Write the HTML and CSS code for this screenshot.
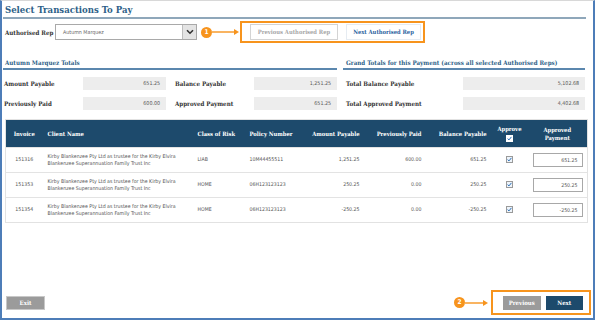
FILE: index.html
```html
<!DOCTYPE html>
<html>
<head>
<meta charset="utf-8">
<link rel="stylesheet" href="styles.css">
</head>
<body>
<div class="frame">
  <h1 class="title">Select Transactions To Pay</h1>

  <div class="rep-row">
    <span class="label rep-label">Authorised Rep</span>
    <div class="select">
      <span class="select-text">Autumn Marquez</span>
      <span class="select-arrow"><svg width="8" height="6" viewBox="0 0 8 6"><path d="M1 1.2 L4 4.2 L7 1.2" fill="none" stroke="#333" stroke-width="1.6"/></svg></span>
    </div>
    <div class="callout">
      <span class="badge">1</span>
      <svg class="pointer" width="28" height="8" viewBox="0 0 28 8"><line x1="0" y1="4" x2="23" y2="4" stroke="#f7941d" stroke-width="1.4"/><path d="M22 1 L27 4 L22 7 Z" fill="#f7941d"/></svg>
    </div>
    <div class="hl-box">
      <button class="btn-outline muted">Previous Authorised Rep</button>
      <button class="btn-outline strong">Next Authorised Rep</button>
    </div>
  </div>

  <div class="totals">
    <section class="tot-left">
      <h2 class="sec-head">Autumn Marquez Totals</h2>
      <div class="grid-left">
        <span class="label">Amount Payable</span><span class="val">651.25</span>
        <span class="label pad">Balance Payable</span><span class="val">1,251.25</span>
        <span class="label">Previously Paid</span><span class="val">600.00</span>
        <span class="label pad">Approved Payment</span><span class="val">651.25</span>
      </div>
    </section>
    <section class="tot-right">
      <h2 class="sec-head">Grand Totals for this Payment (across all selected Authorised Reps)</h2>
      <div class="grid-right">
        <span class="label">Total Balance Payable</span><span class="val">5,102.68</span>
        <span class="label">Total Approved Payment</span><span class="val">4,402.68</span>
      </div>
    </section>
  </div>

  <table class="tx">
    <colgroup>
      <col class="c-inv"><col class="c-client"><col class="c-risk"><col class="c-pol"><col class="c-amt"><col class="c-prev"><col class="c-bal"><col class="c-appr"><col class="c-pay">
    </colgroup>
    <thead>
      <tr>
        <th class="ctr">Invoice</th>
        <th class="left">Client Name</th>
        <th class="left">Class of Risk</th>
        <th class="left">Policy Number</th>
        <th class="right">Amount Payable</th>
        <th class="right">Previously Paid</th>
        <th class="right">Balance Payable</th>
        <th class="ctr">Approve<br><span class="chk hdr"><svg width="5" height="5" viewBox="0 0 5 5"><path d="M0.6 2.6 L2 3.9 L4.4 0.9" fill="none" stroke="#2a6fb8" stroke-width="1"/></svg></span></th>
        <th class="ctr">Approved<br>Payment</th>
      </tr>
    </thead>
    <tbody>
      <tr>
        <td class="ctr">151316</td>
        <td class="left">Kirby Blankenzee Pty Ltd as trustee for the Kirby Elvira Blankenzee Superannuation Family Trust Inc</td>
        <td class="left">LIAB</td>
        <td class="left">10M44455511</td>
        <td class="right">1,251.25</td>
        <td class="right">600.00</td>
        <td class="right">651.25</td>
        <td class="ctr"><span class="chk"><svg width="5" height="5" viewBox="0 0 5 5"><path d="M0.6 2.6 L2 3.9 L4.4 0.9" fill="none" stroke="#2a6fb8" stroke-width="1"/></svg></span></td>
        <td class="ctr"><span class="pay-input">651.25</span></td>
      </tr>
      <tr>
        <td class="ctr">151353</td>
        <td class="left">Kirby Blankenzee Pty Ltd as trustee for the Kirby Elvira Blankenzee Superannuation Family Trust Inc</td>
        <td class="left">HOME</td>
        <td class="left">06H123123123</td>
        <td class="right">250.25</td>
        <td class="right">0.00</td>
        <td class="right">250.25</td>
        <td class="ctr"><span class="chk"><svg width="5" height="5" viewBox="0 0 5 5"><path d="M0.6 2.6 L2 3.9 L4.4 0.9" fill="none" stroke="#2a6fb8" stroke-width="1"/></svg></span></td>
        <td class="ctr"><span class="pay-input">250.25</span></td>
      </tr>
      <tr>
        <td class="ctr">151354</td>
        <td class="left">Kirby Blankenzee Pty Ltd as trustee for the Kirby Elvira Blankenzee Superannuation Family Trust Inc</td>
        <td class="left">HOME</td>
        <td class="left">06H123123123</td>
        <td class="right">-250.25</td>
        <td class="right">0.00</td>
        <td class="right">-250.25</td>
        <td class="ctr"><span class="chk"><svg width="5" height="5" viewBox="0 0 5 5"><path d="M0.6 2.6 L2 3.9 L4.4 0.9" fill="none" stroke="#2a6fb8" stroke-width="1"/></svg></span></td>
        <td class="ctr"><span class="pay-input">-250.25</span></td>
      </tr>
    </tbody>
  </table>

  <div class="footer">
    <button class="btn-exit">Exit</button>
    <div class="footer-right">
      <div class="callout">
        <span class="badge">2</span>
        <svg class="pointer" width="24" height="8" viewBox="0 0 24 8"><line x1="0" y1="4" x2="19" y2="4" stroke="#f7941d" stroke-width="1.4"/><path d="M18 1 L23 4 L18 7 Z" fill="#f7941d"/></svg>
      </div>
      <div class="hl-box nav-box">
        <button class="btn-solid gray">Previous</button>
        <button class="btn-solid navy">Next</button>
      </div>
    </div>
  </div>
</div>
</body>
</html>
```

FILE: styles.css
```css
* { box-sizing: border-box; }
html, body { margin: 0; padding: 0; background: #fff; }

.frame {
  width: 595px;
  height: 320px;
  border-top: 1px solid #d8d8d8;
  border-left: 2px solid #4d7db8;
  border-right: 2px solid #4d7db8;
  border-bottom: 2px solid #4d7db8;
  padding: 0 7px 3px 1px;
  display: flex;
  flex-direction: column;
  font-family: "DejaVu Serif Condensed", "DejaVu Serif", serif;
  font-stretch: condensed;
}

.title {
  margin: 0;
  padding: 2px 0 0 2px;
  font-size: 9.5px;
  line-height: 14px;
  font-weight: bold;
  color: #2e5f88;
  border-bottom: 2px solid #8fa7ba;
}

.rep-row {
  margin-top: 2px;
  height: 22px;
  display: flex;
  align-items: center;
}

.label {
  font-weight: bold;
  font-size: 6.2px;
  color: #333;
  white-space: nowrap;
}

.rep-label { width: 52px; padding-left: 2px; }

.select {
  width: 142px;
  height: 16px;
  border: 1px solid #a9a9a9;
  display: flex;
  align-items: center;
  justify-content: space-between;
}
.select-text {
  font-family: "DejaVu Sans Condensed", "DejaVu Sans", sans-serif;
  font-size: 5.3px;
  color: #666;
  padding-left: 7px;
}
.select-arrow {
  width: 14px;
  height: 100%;
  background: #e4e4e4;
  border-left: 1px solid #bdbdbd;
  display: flex;
  align-items: center;
  justify-content: center;
}

.callout {
  display: flex;
  align-items: center;
  margin-left: 4px;
}
.badge {
  width: 11px;
  height: 11px;
  border-radius: 50%;
  background: #f7941d;
  color: #fff;
  font-family: "DejaVu Sans", sans-serif;
  font-weight: bold;
  font-size: 6.5px;
  line-height: 11px;
  text-align: center;
}
.pointer { display: block; }

.hl-box {
  height: 22px;
  border: 2px solid #f7941d;
  display: flex;
  align-items: center;
  padding: 0 2px 0 8px;
  gap: 8px;
}
.rep-row .hl-box { width: 185px; }

.btn-outline {
  height: 16px;
  padding: 0;
  background: #fff;
  border: 1px solid #d4d4d4;
  font-family: "DejaVu Serif Condensed", "DejaVu Serif", serif;
  font-stretch: condensed;
  font-weight: bold;
  font-size: 5.8px;
  line-height: 14px;
  white-space: nowrap;
  text-align: center;
}
.btn-outline.muted { color: #a7a7a7; width: 88px; }
.btn-outline.strong { color: #2b63a0; border-color: #e6ecf2; width: 75px; }

.totals {
  margin-top: 14px;
  display: flex;
  gap: 6px;
}
.tot-left { width: 334px; padding-left: 0; }
.tot-right { width: 242px; }
.sec-head {
  margin: 0;
  font-size: 6.2px;
  line-height: 11px;
  font-weight: bold;
  color: #2e5f88;
  border-bottom: 2px solid #5b87ae;
  padding-left: 2px;
  white-space: nowrap;
}
.tot-right .sec-head { padding-left: 3px; }

.grid-left, .grid-right {
  margin-top: 7px;
  display: grid;
  row-gap: 7px;
  align-items: center;
}
.grid-left { grid-template-columns: 80px 83px 88px 83px; }
.grid-right { grid-template-columns: 120px 122px; }
.grid-left .label { padding-left: 1px; }
.grid-left .label.pad { padding-left: 9px; }
.grid-right .label { padding-left: 3px; }

.val {
  height: 13px;
  background: #ededed;
  font-family: "DejaVu Sans Condensed", "DejaVu Sans", sans-serif;
  font-size: 5.3px;
  line-height: 13px;
  color: #555;
  text-align: right;
  padding-right: 6px;
}

.tx {
  margin-top: 9px;
  width: 582px;
  margin-left: 2px;
  border-collapse: collapse;
  table-layout: fixed;
  border: 1px solid #e2e2e2;
}
.c-inv { width: 37px; }
.c-client { width: 150px; }
.c-risk { width: 52px; }
.c-pol { width: 55px; }
.c-amt { width: 65px; }
.c-prev { width: 62px; }
.c-bal { width: 65px; }
.c-appr { width: 36px; }
.c-pay { width: 60px; }

.tx th {
  background: #1d4a6c;
  color: #fff;
  font-weight: bold;
  font-size: 5.8px;
  line-height: 8px;
  height: 28px;
  padding: 0 5px;
  white-space: nowrap;
}
.tx td {
  font-family: "DejaVu Sans Condensed", "DejaVu Sans", sans-serif;
  font-size: 5.2px;
  line-height: 7.5px;
  color: #555;
  height: 25px;
  padding: 0 5px;
  border-top: 1px solid #e3e3e3;
}
.tx .left { text-align: left; }
.tx .right { text-align: right; }
.tx .ctr { text-align: center; }
.tx td.left:nth-child(2) { padding-right: 8px; }

.chk {
  display: inline-block;
  width: 7px;
  height: 7px;
  border: 1px solid #9a9a9a;
  background: #eef4fa;
  vertical-align: middle;
  position: relative;
}
.chk svg { display: block; margin: 0 auto; }
.chk.hdr { background: #fff; border-color: #fff; margin-top: 1px; }

.pay-input {
  display: inline-block;
  width: 50px;
  height: 14px;
  border: 1px solid #a8a8a8;
  text-align: right;
  padding-right: 4px;
  line-height: 12px;
  vertical-align: middle;
}

.footer {
  margin-top: auto;
  height: 25px;
  display: flex;
  align-items: center;
  justify-content: space-between;
  margin-right: -5px;
}
.btn-exit {
  margin-left: 3px;
  width: 39px;
  height: 14px;
  background: #9b9b9b;
  border: 1px solid #c8c8c8;
  color: #fff;
  font-family: "DejaVu Serif Condensed", "DejaVu Serif", serif;
  font-stretch: condensed;
  font-weight: bold;
  font-size: 6px;
  padding: 0;
}
.footer-right { display: flex; align-items: center; }
.footer-right .callout { margin-right: 2px; }
.nav-box { height: 25px; width: 100px; padding: 0 6px 0 10px; gap: 5px; }
.btn-solid {
  height: 14px;
  width: 40px;
  border: none;
  color: #fff;
  font-family: "DejaVu Serif Condensed", "DejaVu Serif", serif;
  font-stretch: condensed;
  font-weight: bold;
  font-size: 6px;
  padding: 0;
}
.btn-solid.gray { background: #9b9b9b; }
.btn-solid.navy { background: #1d4a6c; }
```
